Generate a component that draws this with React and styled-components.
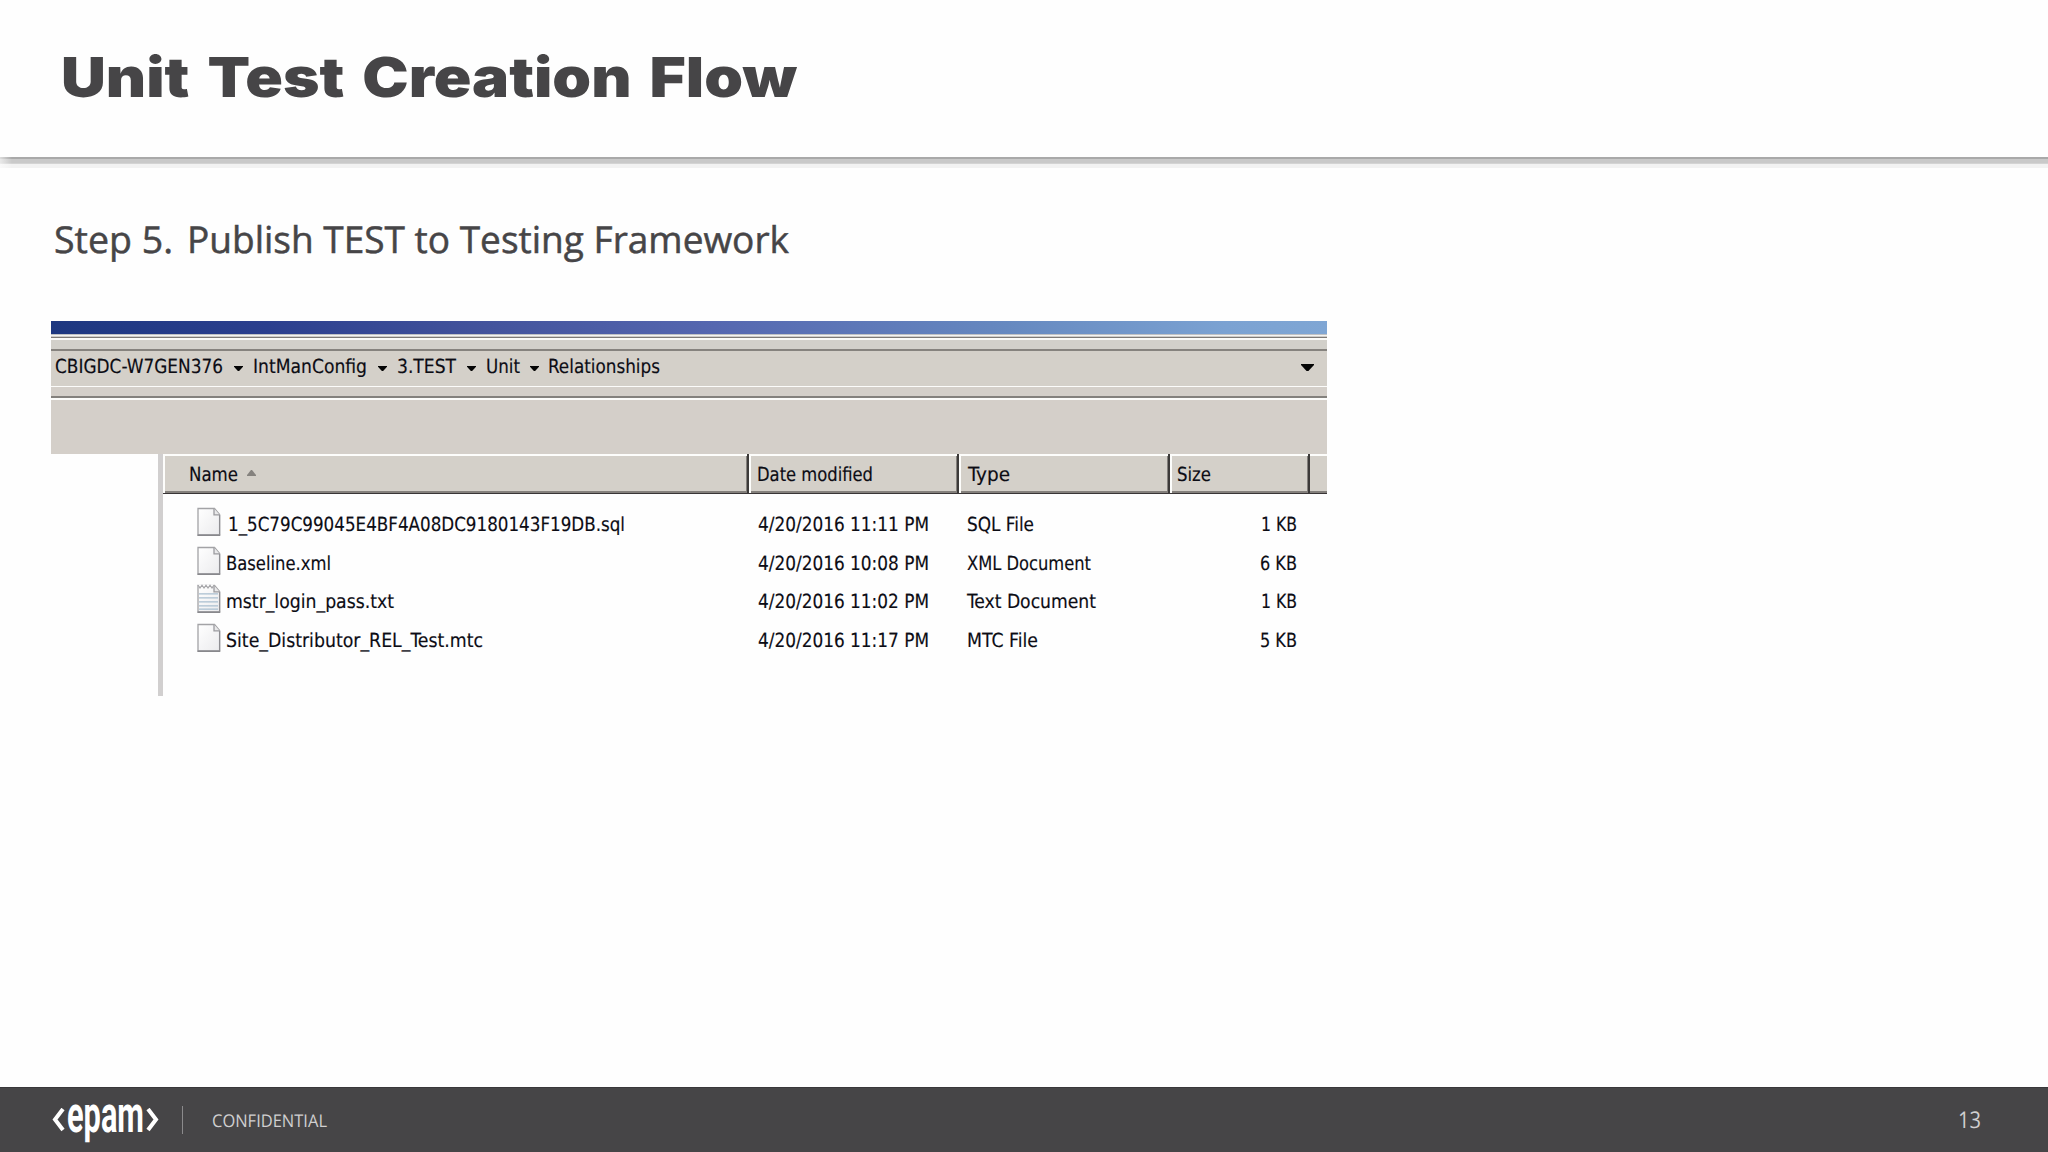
import React, { useLayoutEffect, useRef, useState } from "react";
import styled, { createGlobalStyle } from "styled-components";

const GlobalStyle = createGlobalStyle`
  *, *::before, *::after { box-sizing: border-box; }
  html, body { margin: 0; padding: 0; background: #fefefe; overflow: hidden; }
  body { text-rendering: geometricPrecision; }
`;

const uiFont = `"DejaVu Sans Condensed", "DejaVu Sans", Tahoma, sans-serif`;
const slideFont = `"Open Sans", "Noto Sans", sans-serif`;

/* A text box of a fixed width whose glyphs are condensed or widened to fill it. */
const FitBox = styled.span`
  display: block;
  flex: none;
  width: ${(p) => p.$width}px;
  white-space: nowrap;
`;
const FitInner = styled.span`
  display: inline-block;
  transform-origin: 0 50%;
`;
function Fit({ width, children }) {
  const ref = useRef(null);
  const [scale, setScale] = useState(1);
  useLayoutEffect(() => {
    const natural = ref.current.getBoundingClientRect().width;
    setScale((s) => (width * s) / natural);
  }, [width]);
  return (
    <FitBox $width={width}>
      <FitInner ref={ref} style={{ transform: `scaleX(${scale})` }}>
        {children}
      </FitInner>
    </FitBox>
  );
}

const Slide = styled.div`
  display: flex;
  flex-direction: column;
  width: 2048px;
  height: 1152px;
  background: #fefefe;
`;
const SlideHeader = styled.header`
  height: 157px;
  padding: 42px 0 0 61px;
  background: #fefefe;
`;
const Title = styled.h1`
  margin: 0;
  color: #464547;
  font: 900 55px/72px Inter, "Open Sans", sans-serif;
  word-spacing: 5px;
`;
const HeaderShadow = styled.div`
  height: 12px;
  background:
    linear-gradient(90deg, rgba(254, 254, 254, 0.6), rgba(254, 254, 254, 0) 12px),
    linear-gradient(#a9a9a9 0 2px, #c9c9c9 2px 6px, #d3d3d3 6px 7px, #f2f2f2 7px 11px, #fefefe 11px);
`;
const Body = styled.main`
  flex: 1;
  padding: 43px 0 0 51px;
`;
const Step = styled.p`
  display: flex;
  gap: 14px;
  margin: 0 0 0 3px;
  height: 109px;
  color: #464547;
  font: 400 37px/54px ${slideFont};
  -webkit-text-stroke: 0.5px #464547;
`;

const Explorer = styled.section`
  display: flex;
  flex-direction: column;
  width: 1276px;
  color: #0c0c14;
  font: 400 19.4px/26px ${uiFont};
  -webkit-text-stroke: 0.15px #0c0c14;
`;
const TitleBar = styled.div`
  height: 13px;
  background: linear-gradient(90deg, #1d3780 0%, #2b3f8e 17%, #43539c 34%, #5567b0 52%, #6689c0 75%, #7ba2d2 92%, #7fa6d4 100%);
`;
const Groove = styled.div`
  height: ${(p) => p.$height}px;
  background: ${(p) => p.$lines};
`;
const AddressBar = styled.div`
  display: flex;
  align-items: flex-start;
  height: 35px;
  padding: 3px 13px 0 4px;
  background: #d4d0c9;
`;
const ArrowSlot = styled.span`
  display: flex;
  flex: none;
  justify-content: center;
  width: ${(p) => p.$width}px;
  padding-top: ${(p) => p.$top || 12}px;
`;
const Spacer = styled.span`
  flex: 1;
`;
const ToolStrip = styled.div`
  height: 54px;
  background: #d4cfc9;
`;
const Content = styled.div`
  display: flex;
  height: 242px;
`;
const NavPane = styled.div`
  width: 112px;
  border-right: 5px solid #d1cfcf;
  background: #fefefe;
`;
const FileList = styled.div`
  flex: 1;
`;
const columns = "586px 210px 211px 140px 17px";
const HeadRow = styled.div`
  display: grid;
  grid-template-columns: ${columns};
  height: 40px;
`;
const HeadCell = styled.div`
  display: flex;
  height: 40px;
  padding: 8px 0 0 ${(p) => p.$pad}px;
  background: #d4d0c9;
  border-bottom: 1px solid #393536;
  border-right: ${(p) => (p.$last ? "0" : "2px solid #3c3a39")};
  box-shadow: inset ${(p) => (p.$last ? "0" : "2px")} 2px 0 #fdfdfb, inset ${(p) => (p.$last ? "0" : "-1px")} -2px 0 #84807c;
`;
const SortSlot = styled.span`
  padding: 8px 0 0 9px;
  line-height: 0;
`;
const Rows = styled.div`
  padding-top: 9px;
`;
const Row = styled.div`
  display: grid;
  grid-template-columns: ${columns};
  height: 38.7px;
  padding-top: 2px;
`;
const Cell = styled.div`
  display: flex;
  align-items: flex-start;
  justify-content: ${(p) => (p.$right ? "flex-end" : "flex-start")};
  padding: 7px ${(p) => (p.$right ? 13 : 0)}px 0 ${(p) => p.$pad || 0}px;
`;
const IconSlot = styled.span`
  flex: none;
  width: ${(p) => p.$width}px;
  height: 30px;
  margin-top: -5px;
  line-height: 0;
`;

const Footer = styled.footer`
  display: flex;
  align-items: flex-start;
  height: 65px;
  padding: 0 67px 0 52px;
  border-top: 1px solid #39383a;
  background: #464547;
  color: #d0cfd0;
`;
const Logo = styled.div`
  display: flex;
  width: 108px;
  height: 64px;
  color: #ffffff;
`;
const LogoWord = styled.span`
  display: block;
  height: 64px;
  font: 700 51px/56px Roboto, sans-serif;
`;
const Bracket = styled.svg`
  flex: none;
  margin-top: 20px;
`;
const Divider = styled.div`
  width: 1px;
  height: 28px;
  margin: 18px 29px 0 22px;
  background: #8b8a8c;
`;
const Confidential = styled.span`
  padding-top: 21px;
  font: 400 17.6px/24px ${slideFont};
`;
const PageNumber = styled.span`
  padding-top: 16px;
  font: 400 23px/30px ${slideFont};
`;

function Arrow({ w = 9, h = 5 }) {
  return (
    <svg width={w} height={h} viewBox="0 0 10 5" preserveAspectRatio="none">
      <path d="M0 0H10V0.8L5.7 5H4.3L0 0.8Z" fill="#050505" />
    </svg>
  );
}

function FileIcon({ text }) {
  return (
    <svg width="24" height="30" viewBox="0 0 24 30">
      <defs>
        <linearGradient id="sheet" x1="0" y1="0" x2="1" y2="1">
          <stop offset="0" stopColor="#ffffff" />
          <stop offset="1" stopColor="#ebebed" />
        </linearGradient>
      </defs>
      <path d="M1 1.5H17.5L22.6 7.5V28H1Z" fill="url(#sheet)" stroke="#a3a3a6" strokeWidth="1.3" />
      <path d="M0.5 28.2H23.2" stroke="#85858a" strokeWidth="1.5" />
      <path d="M22.6 8V28" stroke="#8e8e92" strokeWidth="1.2" />
      <path d="M17 1.5V7.8H22.6" fill="#e9e9ea" stroke="#9c9ca0" strokeWidth="1.3" />
      {text && (
        <>
          <path d="M1 1.5H17" stroke="#fefefe" strokeWidth="2.2" />
          <path d="M1 1.2L3 4L5 1.2L7 4L9 1.2L11 4L13 1.2L15 4L17 1.2" fill="none" stroke="#a5a5a8" strokeWidth="1.2" />
          <path d="M2 9.8H21M2 13.8H21M2 17.8H21M2 21.8H21M2 25.2H21" stroke="#a9bfd0" strokeWidth="1.3" />
        </>
      )}
    </svg>
  );
}

const path = [
  ["CBIGDC-W7GEN376", 168, 30],
  ["IntManConfig", 114, 30],
  ["3.TEST", 59, 30],
  ["Unit", 34, 28],
  ["Relationships", 112, 0],
];

const files = [
  { name: "1_5C79C99045E4BF4A08DC9180143F19DB.sql", nw: 397, offset: 31, date: "4/20/2016 11:11 PM", type: "SQL File", tw: 67, size: "1 KB", sw: 36 },
  { name: "Baseline.xml", nw: 105, offset: 29, date: "4/20/2016 10:08 PM", type: "XML Document", tw: 124, size: "6 KB", sw: 37 },
  { name: "mstr_login_pass.txt", nw: 168, offset: 29, date: "4/20/2016 11:02 PM", type: "Text Document", tw: 129, size: "1 KB", sw: 36 },
  { name: "Site_Distributor_REL_Test.mtc", nw: 257, offset: 29, date: "4/20/2016 11:17 PM", type: "MTC File", tw: 71, size: "5 KB", sw: 37 },
];

export default function App() {
  return (
    <Slide>
      <GlobalStyle />
      <SlideHeader>
        <Title><Fit width={736}>Unit Test Creation Flow</Fit></Title>
      </SlideHeader>
      <HeaderShadow />
      <Body>
        <Step>
          <Fit width={119}>Step 5.</Fit>
          <Fit width={602}>Publish TEST to Testing Framework</Fit>
        </Step>
        <Explorer>
          <TitleBar />
          <Groove $height={17} $lines="linear-gradient(#bfc1c4 0 1px, #f4f4f2 1px 2px, #cfccc8 2px 3px, #7d7a77 3px 4px, #fbfbf9 4px 6px, #d2d0ca 6px 15px, #86837e 15px 17px)" />
          <AddressBar>
            {path.map(([label, width, gap]) => (
              <React.Fragment key={label}>
                <Fit width={width}>{label}</Fit>
                {gap > 0 && <ArrowSlot $width={gap}><Arrow /></ArrowSlot>}
              </React.Fragment>
            ))}
            <Spacer />
            <ArrowSlot $width={13} $top={10}><Arrow w={13} h={7} /></ArrowSlot>
          </AddressBar>
          <Groove $height={14} $lines="linear-gradient(#fcfcfa 0 1px, #d4cfc9 1px 10px, #84817d 10px 12px, #fcfcfa 12px 14px)" />
          <ToolStrip />
          <Content>
            <NavPane />
            <FileList>
              <HeadRow>
                <HeadCell $pad={26}>
                  <Fit width={49}>Name</Fit>
                  <SortSlot>
                    <svg width="9" height="6" viewBox="0 0 9 6"><path d="M0 6V5L4 0H5L9 5V6Z" fill="#85827e" /></svg>
                  </SortSlot>
                </HeadCell>
                <HeadCell $pad={8}><Fit width={116}>Date modified</Fit></HeadCell>
                <HeadCell $pad={9}><Fit width={42}>Type</Fit></HeadCell>
                <HeadCell $pad={7}><Fit width={34}>Size</Fit></HeadCell>
                <HeadCell $pad={0} $last />
              </HeadRow>
              <Rows>
                {files.map((f) => (
                  <Row key={f.name}>
                    <Cell $pad={34}>
                      <IconSlot $width={f.offset}><FileIcon text={f.name.endsWith(".txt")} /></IconSlot>
                      <Fit width={f.nw}>{f.name}</Fit>
                    </Cell>
                    <Cell $pad={9}><Fit width={171}>{f.date}</Fit></Cell>
                    <Cell $pad={8}><Fit width={f.tw}>{f.type}</Fit></Cell>
                    <Cell $right><Fit width={f.sw}>{f.size}</Fit></Cell>
                  </Row>
                ))}
              </Rows>
            </FileList>
          </Content>
        </Explorer>
      </Body>
      <Footer>
        <Logo>
          <Bracket width="15" height="24" viewBox="0 0 15 24">
            <path d="M11 1L3 11.5L11 22" fill="none" stroke="#fff" strokeWidth="4" />
          </Bracket>
          <LogoWord><Fit width={77}>epam</Fit></LogoWord>
          <Bracket width="15" height="24" viewBox="0 0 15 24">
            <path d="M4 1L12 11.5L4 22" fill="none" stroke="#fff" strokeWidth="4" />
          </Bracket>
        </Logo>
        <Divider />
        <Confidential><Fit width={115}>CONFIDENTIAL</Fit></Confidential>
        <Spacer />
        <PageNumber><Fit width={23}>13</Fit></PageNumber>
      </Footer>
    </Slide>
  );
}
